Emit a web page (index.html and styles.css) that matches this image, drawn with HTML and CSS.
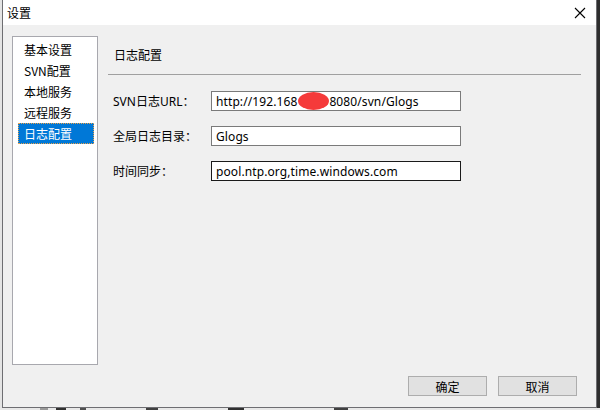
FILE: index.html
```html
<!DOCTYPE html>
<html lang="zh-CN">
<head>
<meta charset="utf-8">
<title>设置</title>
<link rel="stylesheet" href="styles.css">
</head>
<body>
<div class="screen">
  <div class="stage">
    <div class="edge-left"></div>
    <div class="window">
      <div class="titlebar">
        <span class="title">设置</span>
        <svg class="close" width="12" height="12" viewBox="0 0 12 12"><path d="M1 1 L11 11 M11 1 L1 11" stroke="#000" stroke-width="1.1" fill="none"/></svg>
      </div>
      <div class="body">
        <div class="main">
          <ul class="nav">
            <li class="nav-item">基本设置</li>
            <li class="nav-item">SVN配置</li>
            <li class="nav-item">本地服务</li>
            <li class="nav-item">远程服务</li>
            <li class="nav-item active">日志配置</li>
          </ul>
          <div class="panel">
            <div class="panel-title">日志配置</div>
            <div class="sep"></div>
            <div class="rows">
              <div class="row">
                <span class="label">SVN日志URL：</span>
                <div class="field"><span class="value">http://192.168</span><span class="redact"></span><span class="value">8080/svn/Glogs</span></div>
              </div>
              <div class="row">
                <span class="label">全局日志目录：</span>
                <div class="field"><span class="value">Glogs</span></div>
              </div>
              <div class="row">
                <span class="label">时间同步：</span>
                <div class="field focus"><span class="value">pool.ntp.org,time.windows.com</span></div>
              </div>
            </div>
          </div>
        </div>
        <div class="footer">
          <button class="btn">确定</button>
          <button class="btn">取消</button>
        </div>
      </div>
    </div>
    <div class="edge-right"></div>
  </div>
  <div class="desktop">
    <span class="d1"></span><span class="d2"></span><span class="d3"></span><span class="d4"></span><span class="d5"></span><span class="d6"></span>
  </div>
</div>
</body>
</html>
```

FILE: styles.css
```css
* { box-sizing: border-box; }
html, body { margin: 0; padding: 0; }
body {
  font-family: "Noto Sans", "Noto Sans CJK SC", sans-serif;
  font-size: 12px;
  color: #000;
  background: #ececec;
}
.screen { width: 600px; height: 410px; display: flex; flex-direction: column; overflow: hidden; }
.stage { display: flex; height: 408px; }
.edge-left { width: 2px; background: #e4e4e4; }
.edge-right { width: 3px; background: #2e2e2e; }
.window {
  width: 595px;
  height: 408px;
  border: 1px solid #6e6e72;
  border-top: none;
  background: #f0f0f0;
  display: flex;
  flex-direction: column;
}
.titlebar {
  height: 25px;
  background: #fff;
  display: flex;
  align-items: center;
  justify-content: space-between;
  padding: 0 10px 0 4px;
}
.title { font-family: "Noto Sans CJK SC", sans-serif; font-size: 12px; line-height: 16px; }
.close { display: block; margin-top: 1px; }
.body { flex: 1; display: flex; flex-direction: column; }
.main { display: flex; padding: 11px 0 0 9px; height: 340px; }
.nav {
  list-style: none;
  margin: 0;
  padding: 2px 3px 0 5px;
  width: 86px;
  height: 329px;
  background: #fff;
  border: 1px solid #a8a8ae;
}
.nav-item {
  height: 21px;
  line-height: 21px;
  padding-left: 6px;
  font-family: "Noto Sans CJK SC", sans-serif;
  white-space: nowrap;
}
.nav-item.active {
  background: #0078d7;
  color: #fff;
  outline: 1px dotted #e9a24b;
  outline-offset: -1px;
}
.panel { margin-left: 10px; width: 473px; }
.panel-title {
  padding: 11px 0 0 6px;
  line-height: 16px;
  height: 27px;
  font-family: "Noto Sans CJK SC", sans-serif;
}
.sep { height: 1px; background: #a0a0a0; margin-top: 11px; }
.rows { display: flex; flex-direction: column; gap: 15px; padding-top: 16px; }
.row { display: flex; align-items: center; height: 20px; padding-left: 5px; }
.label { width: 98px; white-space: nowrap; }
.field {
  width: 250px;
  height: 20px;
  border: 1px solid #7a7a7a;
  background: #fff;
  padding-left: 4px;
  display: flex;
  align-items: center;
  font-size: 12px;
  letter-spacing: 0.1px;
  overflow: hidden;
  white-space: nowrap;
}
.field.focus { border-color: #1a1a1a; }
.redact {
  display: block;
  flex: none;
  width: 31px;
  height: 18px;
  margin-left: 1px;
  border-radius: 50%;
  background: #f53a3a;
}
.footer { display: flex; justify-content: flex-end; gap: 11px; padding: 11px 19px 0 0; margin-top: 0; }
.btn {
  width: 79px;
  height: 20px;
  border: 1px solid #adadad;
  background: #e1e1e1;
  font-family: "Noto Sans CJK SC", sans-serif;
  font-size: 12px;
  padding: 0;
  color: #000;
}
.desktop { height: 2px; display: flex; background: #e8e8e8; }
.desktop span { display: block; height: 2px; }
.d1 { margin-left: 40px; width: 8px; background: #9a9a9a; }
.d2 { margin-left: 8px; width: 10px; background: #303030; }
.d3 { margin-left: 14px; width: 6px; background: #505050; }
.d4 { margin-left: 60px; width: 12px; background: #404040; }
.d5 { margin-left: 70px; width: 16px; background: #303030; }
.d6 { margin-left: 90px; width: 14px; background: #404040; }
```
